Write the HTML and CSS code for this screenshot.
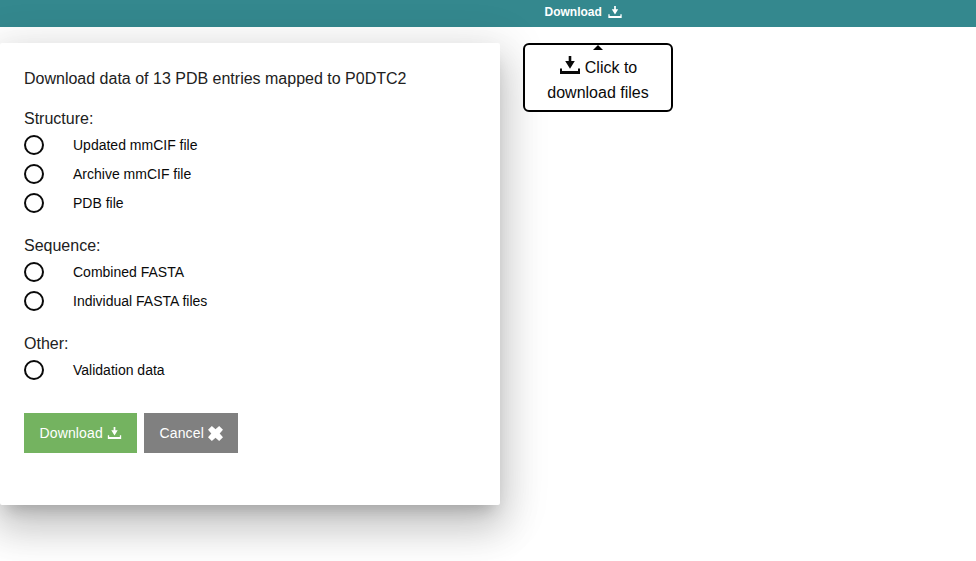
FILE: index.html
```html
<!DOCTYPE html>
<html lang="en">
<head>
<meta charset="utf-8">
<title>Download data</title>
<link rel="stylesheet" href="styles.css">
</head>
<body>
<svg class="defs" aria-hidden="true">
  <symbol id="download" viewBox="0 0 20 18">
    <path d="M8.7 0h2.6v5h3.5L10 12.8 5.2 5h3.5zM0 12.4h2v2.6h16v-2.6h2V18H0z"/>
  </symbol>
  <symbol id="close" viewBox="0 0 14 14">
    <path d="M3.6 0 7 3.1 10.4 0 14 3.6 10.9 7 14 10.4 10.4 14 7 10.9 3.6 14 0 10.4 3.1 7 0 3.6z"/>
  </symbol>
</svg>
<header class="topbar">
  <a class="topbar-link">Download<svg class="icon-top"><use href="#download"/></svg></a>
</header>
<main class="content">
  <section class="dialog">
    <h1 class="title">Download data of 13 PDB entries mapped to P0DTC2</h1>
    <div class="group">
      <h2 class="group-title">Structure:</h2>
      <label class="option"><span class="radio"></span>Updated mmCIF file</label>
      <label class="option"><span class="radio"></span>Archive mmCIF file</label>
      <label class="option"><span class="radio"></span>PDB file</label>
    </div>
    <div class="group">
      <h2 class="group-title">Sequence:</h2>
      <label class="option"><span class="radio"></span>Combined FASTA</label>
      <label class="option"><span class="radio"></span>Individual FASTA files</label>
    </div>
    <div class="group">
      <h2 class="group-title">Other:</h2>
      <label class="option"><span class="radio"></span>Validation data</label>
    </div>
    <div class="actions">
      <button class="button primary">Download<svg class="icon-button"><use href="#download"/></svg></button>
      <button class="button secondary">Cancel<svg class="icon-close"><use href="#close"/></svg></button>
    </div>
  </section>
  <aside class="hint">
    <span class="hint-arrow"></span>
    <div class="hint-line"><svg class="icon-hint"><use href="#download"/></svg>Click to</div>
    <div class="hint-line">download files</div>
  </aside>
</main>
</body>
</html>
```
FILE: styles.css
```css
* { box-sizing: border-box; }
body {
  margin: 0;
  height: 561px;
  overflow: hidden;
  background: #fff;
  color: #212121;
  font-family: "Liberation Sans", Arial, sans-serif;
}
.defs { display: none; }
svg { fill: currentColor; flex: none; }
.topbar {
  height: 27px;
  padding-left: 544.5px;
  background: #34888e;
  color: #fff;
}
.topbar-link {
  display: flex;
  font-size: 12px;
  font-weight: bold;
  line-height: 25px;
}
.icon-top { width: 14px; height: 12px; margin: 6px 0 0 6px; }
.content {
  display: flex;
  align-items: flex-start;
  gap: 23px;
  padding-top: 16px;
}
.dialog {
  width: 500px;
  height: 462px;
  padding: 24px;
  border-radius: 2px;
  background: #fff;
  box-shadow: 0 11px 15px -7px rgba(0,0,0,.2), 0 24px 38px 3px rgba(0,0,0,.14), 0 9px 46px 8px rgba(0,0,0,.12);
}
.title, .group-title {
  margin: 0;
  font-size: 16px;
  font-weight: normal;
  line-height: 24px;
}
.title { margin-bottom: 16px; }
.group { margin-bottom: 17px; }
.group-title { height: 23px; }
.option {
  display: flex;
  align-items: center;
  gap: 29px;
  height: 29px;
  color: #0a0a0a;
  font-size: 14px;
}
.radio {
  width: 20px;
  height: 20px;
  border: 2px solid #0a0a0a;
  border-radius: 50%;
}
.actions { display: flex; gap: 7px; margin-top: 29px; }
.button {
  display: flex;
  align-items: center;
  height: 40px;
  padding: 0 0 0 15.5px;
  border: 0;
  color: #fff;
  font: 14px "Liberation Sans", Arial, sans-serif;
  letter-spacing: .14px;
}
.primary { width: 113px; background: #74b360; }
.secondary { width: 94px; background: #808080; }
.icon-button { width: 15px; height: 12px; margin: -1px 0 0 4px; }
.icon-close { width: 15px; height: 15px; margin-left: 4px; }
.hint {
  position: relative;
  width: 150px;
  height: 69px;
  padding-top: 10px;
  border: 2px solid #000;
  border-radius: 6px;
  background: #fff;
  color: #0a0a0a;
  font-size: 16px;
  line-height: 25px;
}
.hint-line { display: flex; justify-content: center; }
.icon-hint { width: 20px; height: 18px; margin: 1px 5px 0 1px; }
.hint-arrow {
  position: absolute;
  top: 0;
  left: 68px;
  border: solid transparent;
  border-width: 0 5px 5px;
  border-bottom-color: #000;
}
```
